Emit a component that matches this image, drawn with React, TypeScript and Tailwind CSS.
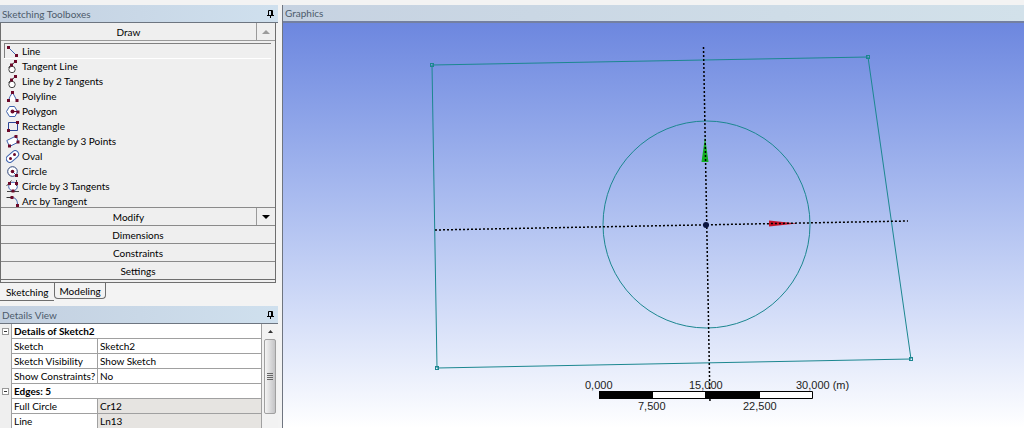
import type { ReactNode } from 'react';

const dot = '#6d0a2a';
const blue = '#3f63ae';

function Dot({ x, y }: { x: number; y: number }) {
  return <rect x={x - 1.5} y={y - 1.5} width="3" height="3" fill={dot} stroke="none" />;
}

const tangentLine = (
  <>
    <circle cx="6" cy="9.500" r="3.200" fill="#fff" stroke="#444" />
    <path d="M2.500 7.500 9 2" stroke="#333" />
    <Dot x={9.5} y={1.5} />
    <Dot x={5.5} y={5} />
  </>
);

const tools: { name: string; icon: ReactNode }[] = [
  {
    name: 'Line',
    icon: (
      <>
        <path d="M2.500 2.500 10.500 10.500" />
        <Dot x={2.5} y={2.5} />
        <Dot x={10.5} y={10.5} />
      </>
    ),
  },
  { name: 'Tangent Line', icon: tangentLine },
  { name: 'Line by 2 Tangents', icon: tangentLine },
  {
    name: 'Polyline',
    icon: (
      <>
        <path d="M2.500 10.500 4 6.500 6.500 2.500 9 7 11 11" fill="#fff" />
        <Dot x={2.5} y={10.5} />
        <Dot x={6.5} y={2.5} />
        <Dot x={11} y={10.5} />
      </>
    ),
  },
  {
    name: 'Polygon',
    icon: (
      <>
        <path d="M3.500 1.500h5L11.500 6.500 9 11.500H3.500L.5 6.500Z" fill="#fff" />
        <path d="M6.500 6.500H12" stroke={dot} />
        <circle cx="6.500" cy="6.500" r="2" fill={dot} stroke="none" />
        <Dot x={12} y={7} />
      </>
    ),
  },
  {
    name: 'Rectangle',
    icon: (
      <>
        <path d="M2.500 2.500h9v8h-9Z" stroke="#2c4496" />
        <Dot x={2.5} y={10.5} />
        <Dot x={11.5} y={2.5} />
      </>
    ),
  },
  {
    name: 'Rectangle by 3 Points',
    icon: (
      <>
        <path d="M.8 5.500 10 1 12.500 7 3.500 11.500Z" fill="#fff" />
        <Dot x={10} y={1.5} />
        <Dot x={12} y={7} />
        <Dot x={3.5} y={11} />
      </>
    ),
  },
  {
    name: 'Oval',
    icon: (
      <>
        <rect x="-.5" y="3" width="14" height="7" rx="3.500" transform="rotate(-42 6.500 6.500)" fill="#fff" />
        <circle cx="4.500" cy="8.500" r="1.500" fill={dot} stroke="none" />
        <circle cx="8.500" cy="4.500" r="1.500" fill={dot} stroke="none" />
      </>
    ),
  },
  {
    name: 'Circle',
    icon: (
      <>
        <circle cx="6.500" cy="6.500" r="4.800" stroke="#2c4478" fill="#fff" />
        <path d="m6.500 6.500 4 4" />
        <circle cx="6.500" cy="6.500" r="1.800" fill={dot} stroke="none" />
        <Dot x={10.5} y={10.5} />
      </>
    ),
  },
  {
    name: 'Circle by 3 Tangents',
    icon: (
      <>
        <circle cx="7" cy="6.500" r="4.300" fill="#fff" />
        <path d="M.5 6 5.500.5M10.500 0v6M1 11.500h12" stroke="#444" />
        <Dot x={3.5} y={3.5} />
        <Dot x={10.5} y={3.5} />
        <Dot x={7} y={11} />
      </>
    ),
  },
  {
    name: 'Arc by Tangent',
    icon: (
      <>
        <path d="M.5 2.500H6" stroke="#333" />
        <path d="M6 2.500c3 0 5.500 2 5.500 7" />
        <Dot x={6} y={2.5} />
        <Dot x={11.5} y={10.5} />
      </>
    ),
  },
];

const groups = ['Dimensions', 'Constraints', 'Settings'];

const details = [
  {
    title: 'Details of Sketch2',
    rows: [
      { label: 'Sketch', value: 'Sketch2' },
      { label: 'Sketch Visibility', value: 'Show Sketch' },
      { label: 'Show Constraints?', value: 'No' },
    ],
  },
  {
    title: 'Edges: 5',
    rows: [
      { label: 'Full Circle', value: 'Cr12', readOnly: true },
      { label: 'Line', value: 'Ln13', readOnly: true },
    ],
  },
];

const corners = [
  [432, 65],
  [868, 57],
  [911, 359],
  [437, 368],
];

function PanelTitle({ title }: { title: string }) {
  return (
    <div className="flex h-[18px] shrink-0 items-center justify-between border-b border-[#6d7580] bg-linear-to-r from-[#c3d0e0] to-[#cfe0ee] pr-1 pl-[2px] text-[#4d5b6b]">
      <h2>{title}</h2>
      <button aria-label={`Pin ${title}`}>
        <svg width="7" height="8" viewBox="0 0 7 8" fill="none" stroke="#000">
          <path d="M1.500 5v-4.500h4v5M0 5.500h7M3.500 5v3M4.500 1v4" />
        </svg>
      </button>
    </div>
  );
}

function Toolboxes() {
  return (
    <section className="flex flex-col">
      <PanelTitle title="Sketching Toolboxes" />
      <div className="mr-[2px] flex flex-col border-x border-[#6e6e6e] bg-[#efefef]">
        <div className="flex h-[18px] border-b border-[#9a9a9a]">
          <button className="flex-1 border-r border-[#9a9a9a]">Draw</button>
          <button aria-label="Scroll up" className="flex w-[18px] items-center justify-center">
            <svg width="8" height="4" viewBox="0 0 8 4" fill="#9b9b9b">
              <path d="M4 0 8 4H0Z" />
            </svg>
          </button>
        </div>
        <ul className="-mb-px pt-[2px]">
          {tools.map((tool, i) => (
            <li key={tool.name} className="mr-1 ml-[3px]">
              <button
                className={`flex h-[15px] w-full items-center gap-px border-t border-l pl-px text-left ${
                  i === 0 ? 'border-[#808080] shadow-[0_1px_0_#fff]' : 'border-transparent'
                }`}
              >
                <svg width="15" height="13" viewBox="0 0 15 13" fill="none" stroke={blue} className="shrink-0">
                  {tool.icon}
                </svg>
                {tool.name}
              </button>
            </li>
          ))}
        </ul>
        <div className="flex h-[18px] border-t border-[#8a8a8a]">
          <button className="flex-1 border-r border-[#9a9a9a]">Modify</button>
          <button aria-label="Scroll down" className="flex w-[18px] items-center justify-center">
            <svg width="8" height="4" viewBox="0 0 8 4" fill="#000">
              <path d="M0 0h8L4 4Z" />
            </svg>
          </button>
        </div>
        {groups.map(group => (
          <button key={group} className="h-[18px] border-t border-[#8a8a8a]">
            {group}
          </button>
        ))}
        <div className="h-1 border-y border-[#6e6e6e]" />
      </div>
      <div role="tablist" className="flex h-[23px] items-start">
        <button role="tab" aria-selected="true" className="h-[18px] border-b border-[#6e6e6e] px-[6px]">
          Sketching
        </button>
        <button role="tab" aria-selected="false" className="h-[16px] rounded-b-sm border border-t-0 border-[#6e6e6e] px-1">
          Modeling
        </button>
      </div>
    </section>
  );
}

function Details() {
  return (
    <section className="flex min-h-0 flex-1 flex-col">
      <PanelTitle title="Details View" />
      <div className="flex min-h-0 flex-1 overflow-hidden">
        <table className="flex-1 table-fixed border-separate border-spacing-0 self-start bg-white">
          <colgroup>
            <col className="w-[12px]" />
            <col className="w-[86px]" />
            <col />
          </colgroup>
          {details.map(group => (
            <tbody key={group.title}>
              <tr className="h-[15px]">
                <td className="border-r border-[#a0a0a0] bg-[#efefef] p-0">
                  <button aria-label={`Collapse ${group.title}`} className="mx-[2px] flex size-[7px] items-center justify-center border border-[#999] bg-white">
                    <span className="h-px w-[3px] bg-[#333]" />
                  </button>
                </td>
                <th colSpan={2} className="border-b border-[#a0a0a0] p-0 pl-[2px] text-left leading-[14px] font-bold">
                  {group.title}
                </th>
              </tr>
              {group.rows.map(row => (
                <tr key={row.label} className="h-[15px]">
                  <td className="border-r border-[#a0a0a0] bg-[#efefef] p-0" />
                  <th className="border-r border-b border-[#a0a0a0] p-0 pl-[2px] text-left leading-[14px] font-normal whitespace-nowrap">
                    {row.label}
                  </th>
                  <td className={`border-b border-[#a0a0a0] p-0 pl-[2px] leading-[14px] ${row.readOnly ? 'bg-[#e6e4e1]' : ''}`}>
                    {row.value}
                  </td>
                </tr>
              ))}
            </tbody>
          ))}
        </table>
        <div className="flex w-[17px] flex-col border-l border-[#a0a0a0] bg-[#f2f2f2]">
          <button aria-label="Scroll details up" className="flex h-[15px] shrink-0 items-center justify-center">
            <svg width="5" height="3" viewBox="0 0 5 3" fill="#333">
              <path d="M2.500 0 5 3H0Z" />
            </svg>
          </button>
          <div className="mx-[2px] flex h-[75px] shrink-0 flex-col items-center justify-center gap-px rounded-xs border border-[#a0a0a0] bg-linear-to-r from-[#f4f4f4] to-[#c4c4c6]">
            <span className="h-px w-[6px] bg-[#666]" />
            <span className="h-px w-[6px] bg-[#666]" />
            <span className="h-px w-[6px] bg-[#666]" />
            <span className="h-px w-[6px] bg-[#666]" />
          </div>
        </div>
      </div>
    </section>
  );
}

function Graphics() {
  return (
    <section className="flex min-w-0 flex-1 flex-col border-l border-[#6f7580]">
      <h2 className="flex h-[18px] shrink-0 items-center border-b-2 border-[#7480a0] bg-linear-to-r from-[#c6d2e1] to-[#d2e1ea] pl-[2px] text-[#4d5b6b]">
        Graphics
      </h2>
      <div className="min-h-0 flex-1 bg-linear-to-b from-[#6d87df] to-white">
        <svg viewBox="283 23 741 405" className="h-full w-full" fill="none">
          <g stroke="#1c8790">
            <path d="M432 65 868 57 911 359 437 368Z" />
            <circle cx="706.500" cy="224.500" r="103.500" />
            {corners.map(([x, y]) => (
              <rect key={x} x={x - 1.5} y={y - 1.5} width="3" height="3" />
            ))}
          </g>
          <path d="M705 137 708.500 162H701.500Z" fill="#12b022" />
          <path d="M769 220.500 797 223.500 769 226.500Z" fill="#c8142a" />
          <g stroke="#000" strokeWidth="1.500" strokeDasharray="2 2">
            <path d="M703.500 47 710 403" />
            <path d="M435 230 908 221" />
          </g>
          <circle cx="706" cy="225" r="3" fill="#0a1440" />
          <path d="M599.500 391.500h213v7h-213Z" fill="#fff" stroke="#000" />
          <path d="M599 391h54v8h-54ZM705 391h55v8h-55Z" fill="#000" />
          <g fill="#222" className="font-['Liberation_Sans',sans-serif] text-[11px]">
            <text x="585" y="389">0,000</text>
            <text x="689" y="389">15,000</text>
            <text x="796" y="389">30,000 (m)</text>
            <text x="638" y="410">7,500</text>
            <text x="743" y="410">22,500</text>
          </g>
        </svg>
      </div>
    </section>
  );
}

export default function App() {
  return (
    <div className="flex h-screen flex-col bg-[#f3f3f3] pt-[5px] font-['Lato',sans-serif] text-[10px] leading-[14px] text-black">
      <main className="flex min-h-0 flex-1 gap-1">
        <aside className="flex w-[278px] shrink-0 flex-col">
          <Toolboxes />
          <Details />
        </aside>
        <Graphics />
      </main>
    </div>
  );
}
